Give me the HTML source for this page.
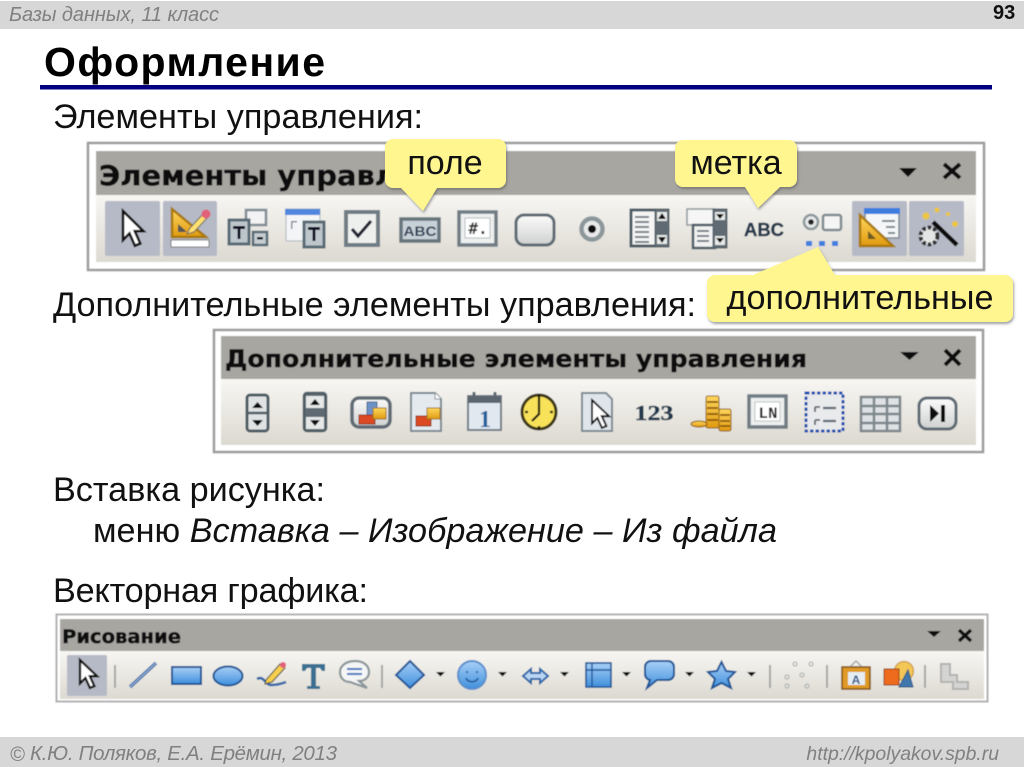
<!DOCTYPE html>
<html lang="ru"><head><meta charset="utf-8"><title>Оформление</title>
<style>
html,body{margin:0;padding:0;background:#fff;width:1024px;height:767px;overflow:hidden}
svg{display:block;position:absolute;left:0;top:0}
text{font-family:"Liberation Sans",sans-serif}
.tb{font-family:"DejaVu Sans",sans-serif;font-weight:bold;fill:#111;stroke:#111;stroke-width:.5}
.ic{filter:url(#b)}
</style></head><body>
<svg width="1024" height="767" viewBox="0 0 1024 767" xmlns="http://www.w3.org/2000/svg">
<defs>
<filter id="b" x="-2%" y="-2%" width="104%" height="104%"><feGaussianBlur stdDeviation="0.55"/></filter>
<filter id="s" x="-10%" y="-10%" width="120%" height="130%"><feDropShadow dx="1" dy="2" stdDeviation="1.2" flood-color="#555" flood-opacity=".55"/></filter>
<linearGradient id="g" x1="0" y1="0" x2="0" y2="1"><stop offset="0" stop-color="#f7f6f2"/><stop offset="1" stop-color="#dcd9d1"/></linearGradient>
<linearGradient id="bl" x1="0" y1="0" x2="0" y2="1"><stop offset="0" stop-color="#a9d0f7"/><stop offset="1" stop-color="#3f8fdc"/></linearGradient>
<linearGradient id="yl" x1="0" y1="0" x2="0" y2="1"><stop offset="0" stop-color="#ffd75e"/><stop offset="1" stop-color="#e09a10"/></linearGradient>
<linearGradient id="gy" x1="0" y1="0" x2="0" y2="1"><stop offset="0" stop-color="#fbfbfa"/><stop offset="1" stop-color="#cfd1d1"/></linearGradient>
<path id="cur" d="M0 0V26L6 20L11 31L16 29L11 18H19Z"/>
</defs>

<!-- header/footer -->
<rect x="0" y="1" width="1024" height="28" fill="#d7d7d7"/>
<rect x="0" y="737" width="1024" height="30" fill="#d7d7d7"/>
<text x="9" y="21" font-size="20" font-style="italic" fill="#808080" textLength="210" lengthAdjust="spacing">Базы данных, 11 класс</text>
<text x="993" y="19" font-size="20" font-weight="bold" fill="#111">93</text>
<text x="44" y="76" font-size="41" font-weight="bold" fill="#000" textLength="281" lengthAdjust="spacing">Оформление</text>
<rect x="40" y="85" width="952" height="4.500" fill="#000080"/>
<text x="10" y="761" font-size="20" font-style="italic" fill="#808080">©</text>
<text x="30" y="760" font-size="20.500" font-style="italic" fill="#808080" textLength="307" lengthAdjust="spacing">К.Ю. Поляков, Е.А. Ерёмин, 2013</text>
<text x="999" y="760" font-size="19.400" font-style="italic" fill="#808080" text-anchor="end">http://kpolyakov.spb.ru</text>

<!-- body text -->
<g font-size="34.200" fill="#111">
<text x="53" y="128" textLength="370" lengthAdjust="spacing">Элементы управления:</text>
<text x="53" y="316" textLength="643" lengthAdjust="spacing">Дополнительные элементы управления:</text>
<text x="53" y="501" textLength="272" lengthAdjust="spacing">Вставка рисунка:</text>
<text x="93" y="542" textLength="684" lengthAdjust="spacing">меню <tspan font-style="italic">Вставка – Изображение – Из файла</tspan></text>
<text x="53" y="602" textLength="315" lengthAdjust="spacing">Векторная графика:</text>
</g>

<!-- toolbar 1 -->
<g class="ic">
<rect x="88" y="143" width="896" height="127" fill="#fff" stroke="#9c9c9c" stroke-width="2.500"/>
<rect x="96" y="151" width="880" height="44" fill="#a8a6a1"/>
<rect x="96" y="195" width="880" height="67" fill="url(#g)"/>
<text class="tb" x="99" y="185" font-size="28" textLength="297" lengthAdjust="spacingAndGlyphs">Элементы управл</text>
<path d="M899 168h18l-9 9z" fill="#111"/>
<path d="M944 164l16 14M960 164l-16 14" stroke="#111" stroke-width="4"/>
<rect x="105" y="201" width="55" height="55" rx="2" fill="#b6bac6"/>
<rect x="163" y="201" width="54" height="55" rx="2" fill="#b6bac6"/>
<rect x="852" y="201" width="55" height="55" rx="2" fill="#b6bac6"/>
<rect x="909" y="201" width="55" height="55" rx="2" fill="#b6bac6"/>
<use href="#cur" fill="#fff" stroke="#111" stroke-width="2.400" transform="translate(123 211) scale(1.080 1.120)"/>
<!-- design -->
<path d="M172 209V237H206Z" fill="url(#yl)" stroke="#a87910" stroke-width="2.500"/>
<path d="M178 224V232H187Z" fill="#555"/>
<path d="M190 228L204 213L208 217L194 232L187 234Z" fill="#ffe070" stroke="#666"/>
<circle cx="206" cy="214" r="4.500" fill="#e2607a"/>
<rect x="171" y="240" width="38" height="7" fill="#fff" stroke="#777"/>
<!-- form controls -->
<rect x="246" y="210" width="20" height="15" fill="#f3f3f3" stroke="#7f8c94" stroke-width="2.500"/>
<rect x="229" y="220" width="20" height="24" fill="#bcc6cb" stroke="#596a75" stroke-width="3"/>
<path d="M233 226h12v3h-12zM237.500 229h3v10h-3z" fill="#112"/>
<rect x="253" y="232" width="14" height="13" fill="#c6ced2" stroke="#596a75" stroke-width="2.500"/>
<path d="M257 237h6v2.500h-6z" fill="#112"/>
<!-- frame -->
<rect x="286" y="209" width="34" height="32" fill="#f3f5f6" stroke="#aab5ba"/>
<rect x="285" y="209" width="35" height="6" fill="#4f86de"/>
<path d="M291 221h6v1.500h-6zM291 221h1.500v8h-1.500z" fill="#889"/>
<rect x="304" y="222" width="20" height="25" fill="#bcc6cb" stroke="#596a75" stroke-width="3"/>
<path d="M308 227h12v3h-12zM312.500 230h3v11h-3z" fill="#112"/>
<!-- checkbox -->
<rect x="346" y="212" width="32" height="33" fill="#eef0ee" stroke="#6f7b83" stroke-width="4"/>
<path d="M352 229l6 7 13-15" fill="none" stroke="#223" stroke-width="3.200"/>
<!-- ABC field -->
<rect x="401" y="219" width="38" height="22" fill="#c8d0d8" stroke="#66747e" stroke-width="3.500"/>
<text x="420" y="236" font-size="14" font-weight="bold" text-anchor="middle" fill="#2b3f55" textLength="33" lengthAdjust="spacingAndGlyphs">ABC</text>
<!-- #. -->
<rect x="459" y="212" width="37" height="33" fill="#eef0ef" stroke="#6f7b83" stroke-width="3.500"/>
<rect x="465" y="218" width="25" height="20" fill="#fff" stroke="#b5bcc0"/>
<text x="478" y="234" font-size="16" font-weight="bold" text-anchor="middle" fill="#222" style="font-family:'DejaVu Sans Mono',monospace">#.</text>
<!-- button -->
<rect x="516" y="215" width="38" height="30" rx="8" fill="url(#gy)" stroke="#5f6b74" stroke-width="3"/>
<!-- radio -->
<circle cx="592" cy="229" r="10.500" fill="#e8eaea" stroke="#8c979b" stroke-width="4.500"/>
<circle cx="592" cy="229" r="4" fill="#111"/>
<!-- listbox -->
<rect x="631" y="210" width="25" height="36" fill="#f3f4f3" stroke="#4e5b66" stroke-width="3"/>
<path d="M635 217h14M635 222h14M635 227h14M635 232h14M635 237h14M635 242h14" stroke="#667079" stroke-width="1.800"/>
<rect x="655" y="209" width="14" height="38" fill="#5f6a72" stroke="#4e5b66"/>
<rect x="657" y="212" width="10" height="9" fill="#e8eaea"/><rect x="657" y="235" width="10" height="9" fill="#e8eaea"/>
<path d="M662 213l-4 6h8zM662 243l-4-6h8z" fill="#111"/>
<!-- combobox -->
<rect x="687" y="209" width="27" height="16" fill="#f5f6f5" stroke="#8a959b" stroke-width="1.500"/>
<rect x="693" y="225" width="22" height="23" fill="#f1f2f1" stroke="#4e5b66" stroke-width="2.500"/>
<path d="M697 231h12M697 236h12M697 241h12" stroke="#667079" stroke-width="1.800"/>
<rect x="713" y="209" width="14" height="39" fill="#5f6a72" stroke="#4e5b66"/>
<rect x="715" y="212" width="10" height="8" fill="#e8eaea"/><rect x="715" y="236" width="10" height="9" fill="#e8eaea"/>
<path d="M716 214h8l-4 5zM716 238h8l-4 5z" fill="#111"/>
<!-- ABC label -->
<text x="764" y="236" font-size="18" font-weight="bold" text-anchor="middle" fill="#26394d" textLength="40" lengthAdjust="spacingAndGlyphs" stroke="#26394d" stroke-width=".4">ABC</text>
<!-- more -->
<circle cx="811" cy="222" r="7" fill="#e8eaea" stroke="#8c979b" stroke-width="2.500"/><circle cx="811" cy="222" r="2.800" fill="#222"/>
<rect x="823" y="215" width="18" height="15" rx="2" fill="#f5f5f4" stroke="#7f8b92" stroke-width="2.500"/>
<path d="M806 241h6v5h-6zM819 241h6v5h-6zM832 241h6v5h-6z" fill="#3f7fe0"/>
<!-- form props -->
<rect x="865" y="209" width="34" height="29" fill="#f4f6f8" stroke="#7c8890" stroke-width="1.500"/>
<rect x="864" y="208" width="36" height="6" fill="#3d7de0"/>
<path d="M882 221h13M886 227h9M888 233h7" stroke="#7c8890" stroke-width="2"/>
<path d="M860 215L893 246H860Z" fill="url(#yl)" stroke="#a87910" stroke-width="2.500"/>
<path d="M868 231V239H876Z" fill="#6a5a20"/>
<!-- wand -->
<path d="M933 222L957 245" stroke="#111" stroke-width="4.500"/>
<circle cx="926" cy="216" r="3.500" fill="#ecc440"/><circle cx="937" cy="210" r="2.500" fill="#ecc440"/><circle cx="948" cy="214" r="2" fill="#ecc440"/><circle cx="955" cy="224" r="3" fill="#ecc440"/>
<circle cx="929" cy="236" r="8.500" fill="#e4e6e6" stroke="#333" stroke-width="4" stroke-dasharray="3.500 2"/>
</g>

<!-- callouts -->
<g filter="url(#s)" fill="#fff68f">
<path d="M393 139H498a8 8 0 0 1 8 8V180a8 8 0 0 1-8 8H437L423 211L401 188H393a8 8 0 0 1-8-8V147a8 8 0 0 1 8-8Z"/>
<path d="M683 140H789a8 8 0 0 1 8 8V179a8 8 0 0 1-8 8H780L758 208L745 187H683a8 8 0 0 1-8-8V148a8 8 0 0 1 8-8Z"/>
<path d="M715 275H753L818 247L835 275H1005a8 8 0 0 1 8 8V314a8 8 0 0 1-8 8H715a8 8 0 0 1-8-8V283a8 8 0 0 1 8-8Z"/>
</g>
<g font-size="34" fill="#111" text-anchor="middle">
<text x="445" y="174">поле</text>
<text x="736" y="174">метка</text>
<text x="860" y="309" textLength="267" lengthAdjust="spacingAndGlyphs">дополнительные</text>
</g>

<!-- toolbar 2 -->
<g class="ic">
<rect x="214" y="330" width="769" height="122" fill="#fff" stroke="#9c9c9c" stroke-width="2.500"/>
<rect x="221" y="336" width="755" height="43" fill="#a8a6a1"/>
<rect x="221" y="379" width="755" height="66" fill="url(#g)"/>
<text class="tb" x="225" y="367" font-size="24" textLength="582" lengthAdjust="spacingAndGlyphs">Дополнительные элементы управления</text>
<path d="M900 352h19l-9.500 8z" fill="#111"/>
<path d="M945 350l15 15M960 350l-15 15" stroke="#111" stroke-width="4"/>
<!-- spin -->
<rect x="247" y="395" width="21" height="36" rx="3" fill="#e0e3e3" stroke="#4e5b64" stroke-width="3"/>
<path d="M248 413h19" stroke="#4e5b64" stroke-width="2.500"/>
<path d="M252 408l5.500-6 5.500 6zM252 420h11l-5.500 6z" fill="#111"/>
<!-- scrollbar -->
<rect x="304" y="393" width="22" height="38" rx="3" fill="#5f6a72" stroke="#4e5b64" stroke-width="2.500"/>
<rect x="306" y="396" width="18" height="12" fill="#e6e8e8"/><rect x="306" y="417" width="18" height="12" fill="#e6e8e8"/>
<path d="M310 405l5-6 5 6zM310 420h10l-5 6z" fill="#111"/>
<!-- group box -->
<rect x="352" y="398" width="38" height="29" rx="7" fill="url(#gy)" stroke="#5f6b74" stroke-width="3.500"/>
<rect x="367" y="402" width="10" height="13" fill="#6d93c6" stroke="#45648c"/>
<rect x="359" y="415" width="16" height="9" fill="#dd4a20" stroke="#8a2d14"/>
<rect x="373" y="408" width="13" height="11" fill="url(#yl)" stroke="#9a7010"/>
<!-- doc shapes -->
<path d="M411 393H435L441 399V431H411Z" fill="#e5eaef" stroke="#7c8892" stroke-width="2"/>
<path d="M435 393V399H441" fill="#fff" stroke="#7c8892"/>
<rect x="416" y="416" width="15" height="10" fill="#dd4a20" stroke="#8a2d14"/>
<rect x="427" y="408" width="13" height="11" fill="url(#yl)" stroke="#9a7010"/>
<!-- calendar -->
<rect x="468" y="396" width="33" height="34" fill="#e1e8ef" stroke="#6f7b85" stroke-width="2"/>
<rect x="468" y="396" width="33" height="7" fill="#5b6671"/>
<path d="M474 392v7M495 392v7" stroke="#5b6671" stroke-width="3"/>
<text x="485" y="427" font-size="24" font-weight="bold" text-anchor="middle" fill="#245f9c" style="font-family:'Liberation Serif',serif">1</text>
<!-- clock -->
<circle cx="539" cy="412" r="17" fill="#f8e25a" stroke="#3a3418" stroke-width="3"/>
<path d="M539 398V414L532 421" fill="none" stroke="#111" stroke-width="2.200"/>
<path d="M539 395v3M539 426v3M525 412h3M550 412h3" stroke="#111" stroke-width="2.200"/>
<!-- doc cursor -->
<path d="M582 393H606L612 399V431H582Z" fill="#dfe5eb" stroke="#7c8892" stroke-width="2"/>
<use href="#cur" fill="#fff" stroke="#111" stroke-width="2.200" transform="translate(592 400) scale(.9)"/>
<!-- 123 -->
<text x="654" y="420" font-size="21" font-weight="bold" text-anchor="middle" fill="#24394e" textLength="39" lengthAdjust="spacingAndGlyphs" stroke="#24394e" stroke-width=".4" style="font-family:'Liberation Serif',serif">123</text>
<!-- coins -->
<g stroke="#8a5608" fill="url(#yl)"><rect x="706" y="396" width="13" height="32" rx="2"/><rect x="719" y="409" width="12" height="22" rx="2"/><ellipse cx="699" cy="424" rx="8" ry="3"/></g>
<path d="M707 402h11M707 408h11M707 414h11M707 420h11M720 415h10M720 421h10M720 426h10" stroke="#8a5608" stroke-width="1.800"/>
<!-- LN -->
<rect x="749" y="396" width="37" height="31" fill="#eef0f0" stroke="#6f7b83" stroke-width="3.500"/>
<rect x="755" y="402" width="25" height="19" fill="#fff" stroke="#bcc2c6"/>
<text x="768" y="418" font-size="16" font-weight="bold" text-anchor="middle" fill="#222" style="font-family:'Liberation Mono',monospace">LN</text>
<!-- fieldgroup -->
<rect x="806" y="393" width="37" height="38" fill="#e8eaec" stroke="#1750b0" stroke-width="3" stroke-dasharray="3.500 2"/>
<path d="M815 407h5M815 407v5M815 420h5M815 420v5" stroke="#5d6870" stroke-width="1.800"/><path d="M823 408h13M823 421h13" stroke="#5d6870" stroke-width="2.200"/>
<!-- table -->
<rect x="861" y="397" width="39" height="34" fill="#dfe2e4" stroke="#7d868c" stroke-width="2.500"/>
<path d="M861 406h39M861 414h39M861 423h39M874 397v34M887 397v34" stroke="#7d868c" stroke-width="2.500"/>
<!-- nav -->
<rect x="919" y="398" width="37" height="31" rx="8" fill="url(#gy)" stroke="#5f6b74" stroke-width="3"/>
<path d="M930 405l9 8.500-9 8.500zM941 405h4v17h-4z" fill="#111"/>
</g>

<!-- toolbar 3 -->
<g class="ic">
<rect x="56.500" y="614.500" width="931" height="87" fill="#fff" stroke="#b0b0b0" stroke-width="2"/>
<rect x="60" y="619" width="924" height="32" fill="#a8a6a1"/>
<rect x="60" y="651" width="924" height="48" fill="url(#g)"/>
<text class="tb" x="62" y="643" font-size="19" textLength="119" lengthAdjust="spacingAndGlyphs">Рисование</text>
<path d="M927 631h14l-7 6z" fill="#111"/>
<path d="M959 630l12 11M971 630l-12 11" stroke="#111" stroke-width="3.400"/>
<rect x="67" y="655" width="40" height="41" rx="2" fill="#b6bac6"/>
<use href="#cur" fill="#fff" stroke="#111" stroke-width="2.600" transform="translate(80 660) scale(.9)"/>
<g stroke="#a7a7a5" stroke-width="2"><path d="M115 665v23M382 665v23M770 665v23M827 665v23M925 665v23"/></g>
<path d="M130 687L156 663" stroke="#2c5a9a" stroke-width="3.500"/><path d="M130 687L156 663" stroke="#a8c8ee" stroke-width="1"/>
<rect x="172" y="667" width="29" height="17" fill="url(#bl)" stroke="#1c5596" stroke-width="2"/>
<ellipse cx="228" cy="676" rx="14.500" ry="9.500" fill="url(#bl)" stroke="#1c5596" stroke-width="2"/>
<path d="M257 679c7-4 8 6 14 6 6 0 10-1 15-3" fill="none" stroke="#2f67a8" stroke-width="2.500"/>
<path d="M266 680L280 664L285 668L272 682L265 684Z" fill="#f5cf4d" stroke="#444"/><circle cx="283" cy="665" r="3" fill="#e2607a"/>
<path d="M302 664H325V671H322L320 668H316V686H320V689H307V686H311V668H307L305 671H302Z" fill="#3a6f92"/>
<path d="M355 661C364 661 369 666 369 672C369 678 364 681 359 681L367 688L350 682C344 682 340 678 340 672C340 666 346 661 355 661Z" fill="#f4f5f5" stroke="#8a9599" stroke-width="2.200"/>
<path d="M347 669h15M347 674h15" stroke="#3673c0" stroke-width="2"/>
<path d="M410 661L424 675L410 688L396 675Z" fill="url(#bl)" stroke="#1c5596" stroke-width="2"/>
<circle cx="472" cy="675" r="14" fill="url(#bl)" stroke="#5a8fcc" stroke-width="2"/>
<path d="M466 678c2 5 10 5 12 0M467 671v2M477 671v2" fill="none" stroke="#1c5596" stroke-width="1.600"/>
<path d="M523 676L531 669V673H540V669L548 676L540 683V679H531V683Z" fill="#b9d5f3" stroke="#2c66a8" stroke-width="2"/>
<rect x="586" y="663" width="25" height="24" fill="url(#bl)" stroke="#1c5596" stroke-width="1.600"/>
<path d="M586 670h25M592 663v24" stroke="#1c5596" stroke-width="1.400"/>
<path d="M651 661H668A6 6 0 0 1 674 667V674A6 6 0 0 1 668 680H657L647 688L650 680A6 6 0 0 1 645 674V667A6 6 0 0 1 651 661Z" fill="url(#bl)" stroke="#1c5596" stroke-width="2"/>
<path d="M721.500 662L726 671L735 672L728 679L731 688L721.500 683L712 688L715 679L708 672L717 671Z" fill="url(#bl)" stroke="#1c5596" stroke-width="2"/>
<g fill="#111"><path d="M436 672h9l-4.500 4.500zM498 672h9l-4.500 4.500zM560 672h9l-4.500 4.500zM622 672h9l-4.500 4.500zM685 672h9l-4.500 4.500zM747 672h9l-4.500 4.500z"/></g>
<g fill="none" stroke="#b3b7b7" stroke-width="1.300"><circle cx="795" cy="664" r="2"/><circle cx="811" cy="664" r="2"/><circle cx="802" cy="675" r="2"/><circle cx="787" cy="677" r="2"/><circle cx="787" cy="686" r="2"/><circle cx="807" cy="686" r="2"/></g>
<rect x="842" y="667" width="28" height="22" fill="#e09a28" stroke="#7c4c08" stroke-width="1.500"/>
<rect x="848" y="672" width="17" height="13" fill="#e6edf3"/>
<text x="856" y="684" font-size="12" font-weight="bold" text-anchor="middle" fill="#1d4f87">A</text>
<path d="M850 667l6-6 6 6" fill="none" stroke="#888"/>
<circle cx="904" cy="671" r="9.500" fill="#f3c656" stroke="#c48c2a"/>
<path d="M899 687L908 670L913 687Z" fill="#3f78ae" stroke="#24527e"/>
<rect x="884" y="669" width="15" height="16" fill="#ee6a1c" stroke="#8c3a0c"/>
<path d="M941 664H950V675H957V682H968V689H953V682H941Z" fill="#d4d4d2" stroke="#b2b2b0" stroke-width="2"/>
</g>
</svg>
</body></html>
